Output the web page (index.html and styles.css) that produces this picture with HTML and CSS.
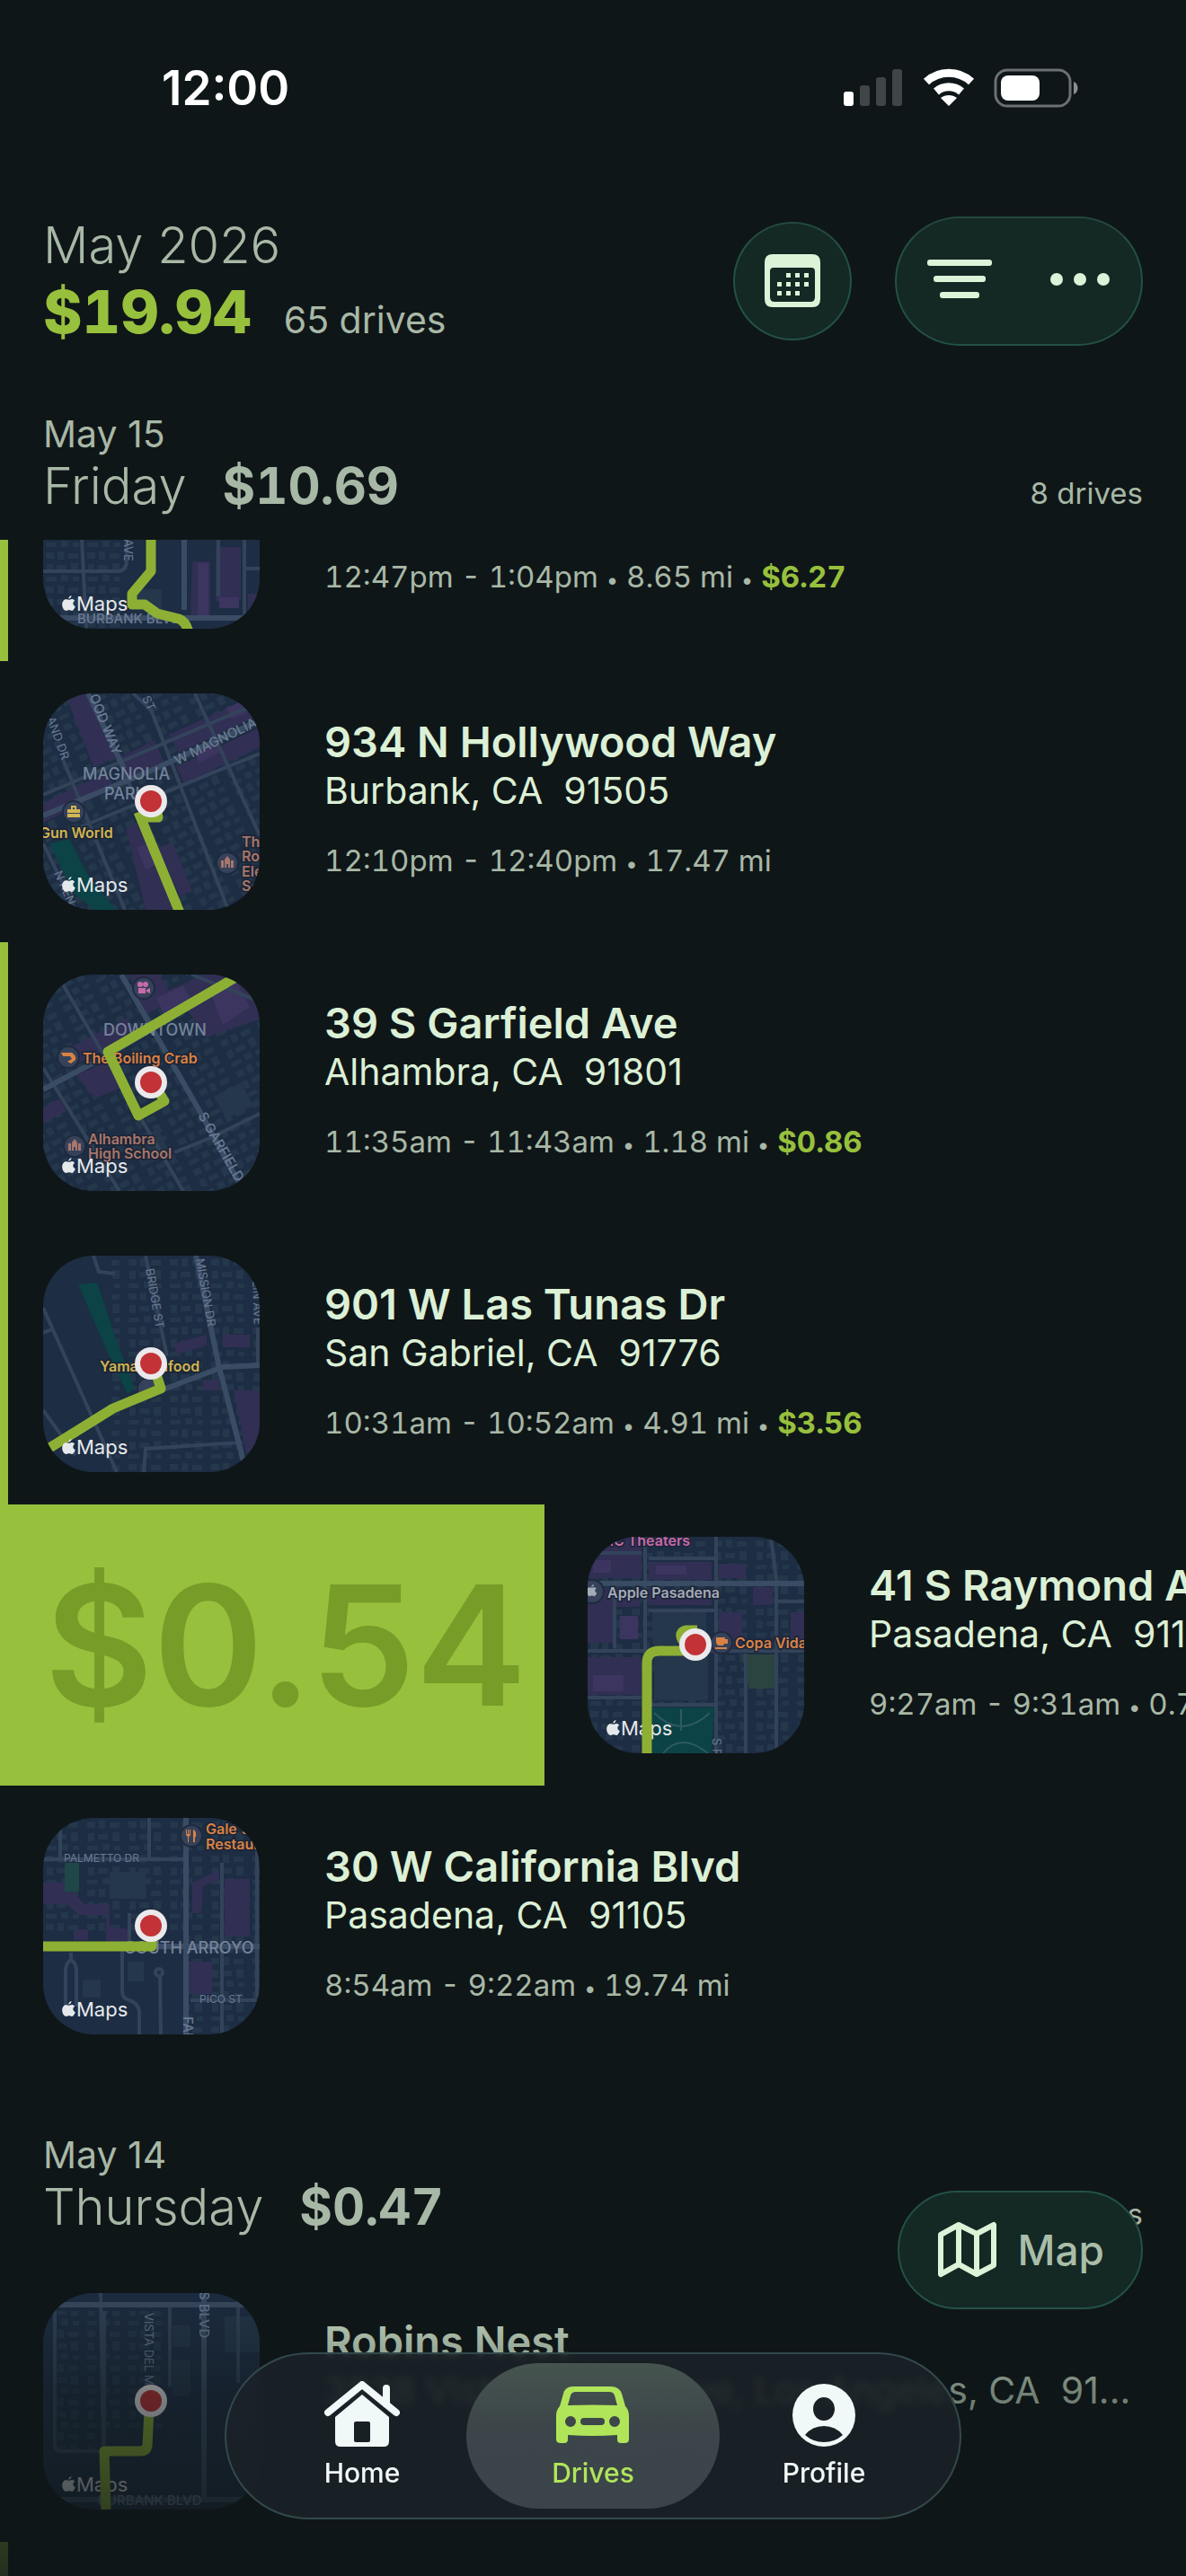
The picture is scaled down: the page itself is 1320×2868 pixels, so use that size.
FILE: index.html
```
<!DOCTYPE html>
<html lang="en">

<head>
    <meta charset="UTF-8">
    <meta name="viewport" content="width=device-width, initial-scale=1.0">
    <title>Drives</title>
    <link rel="stylesheet" href="styles.css">
</head>

<body>
    <!-- shared icons and map textures -->
    <svg class="defs" width="0" height="0" aria-hidden="true">
        <defs>
            <pattern id="blocks" width="46" height="38" patternUnits="userSpaceOnUse">
                <path class="building" d="M3 4h9v7H3zM16 3h7v9h-7zM28 5h11v6H28zM4 17h7v9H4zM15 18h11v6H15zM31 16h8v10h-8zM3 31h12v5H3zM20 29h8v7h-8zM33 31h7v5h-7z" />
            </pattern>
            <pattern id="blocks-tilt" width="46" height="38" patternUnits="userSpaceOnUse" patternTransform="rotate(-27)">
                <path class="building" d="M3 4h9v7H3zM16 3h7v9h-7zM28 5h11v6H28zM4 17h7v9H4zM15 18h11v6H15zM31 16h8v10h-8zM3 31h12v5H3zM20 29h8v7h-8zM33 31h7v5h-7z" />
            </pattern>
            <symbol id="apple" viewBox="0 0 14 17">
                <path d="M9.8 0c.2 1.700-1.300 3.500-3 3.500C6.600 1.800 8.200.2 9.800 0zM7.200 4.600c.7 0 1.700-.8 3.100-.8 1 0 2.300.5 3 1.600-2.600 1.600-2.200 5 .6 6.100-.6 1.800-2 4.500-3.700 4.500-1.100 0-1.500-.7-2.900-.7s-1.800.7-2.900.7C2.300 16-.1 12.600.1 9.200.2 5.900 2.300 4 4.300 4c1.300 0 2.200.6 2.900.6z" />
            </symbol>
            <g id="attribution">
                <use href="#apple" x="21" y="204" width="15" height="18" />
                <text x="37" y="221">Maps</text>
            </g>
            <g id="pin">
                <circle class="pin-ring" cx="120" cy="120" r="18" />
                <circle class="pin-dot" cx="120" cy="120" r="12" />
            </g>
        </defs>
    </svg>

    <div class="status-bar">
        <span class="time">12:00</span>
        <svg class="status-icons" width="264" height="44" viewBox="0 0 264 44" aria-hidden="true">
            <rect x="1" y="26" width="11" height="16" rx="3" fill="#fff" />
            <rect x="19" y="19" width="11" height="23" rx="3" fill="#404547" />
            <rect x="37" y="10" width="11" height="32" rx="3" fill="#404547" />
            <rect x="55" y="1" width="11" height="41" rx="3" fill="#404547" />
            <path d="M118 42l-9-9c5-4 13-4 18 0z" fill="#fff" />
            <path d="M104 26c8-7 20-7 28 0" fill="none" stroke="#fff" stroke-width="9" />
            <path d="M93 15c14-13 36-13 50 0" fill="none" stroke="#fff" stroke-width="9" />
            <rect x="170" y="2" width="83" height="40" rx="13" fill="none" stroke="#6b7072" stroke-width="3" />
            <rect x="176" y="8" width="43" height="28" rx="8" fill="#fff" />
            <path d="M257 15c6 2 6 12 0 14z" fill="#8a8e90" />
        </svg>
    </div>

    <header class="summary">
        <div>
            <div class="month">May 2026</div>
            <div class="month-totals">
                <span class="total">$19.94</span>
                <span class="count">65 drives</span>
            </div>
        </div>
        <div class="actions">
            <button class="glass round" aria-label="Calendar">
                <svg width="64" height="60" viewBox="0 0 64 60">
                    <path fill-rule="evenodd" d="M10 0h44q9 0 9 9v41q0 9-9 9H10q-9 0-9-9V9q0-9 9-9zM11 15q-4 0-4 4v29q0 5 5 5h40q5 0 5-5V19q0-4-4-4z" />
                    <path d="M25 21h5v5h-5zM35 21h5v5h-5zM45 21h5v5h-5zM15 31h5v5h-5zM25 31h5v5h-5zM35 31h5v5h-5zM45 31h5v5h-5zM15 41h5v5h-5zM25 41h5v5h-5zM35 41h5v5h-5z" />
                </svg>
            </button>
            <div class="glass group">
                <button aria-label="Filter">
                    <svg width="72" height="44" viewBox="0 0 72 44">
                        <rect x="0" y="0" width="72" height="7" rx="3" />
                        <rect x="7" y="18" width="58" height="7" rx="3" />
                        <rect x="14" y="36" width="44" height="7" rx="3" />
                    </svg>
                </button>
                <button aria-label="More">
                    <svg width="68" height="16" viewBox="0 0 68 16">
                        <circle cx="8" cy="8" r="7" />
                        <circle cx="34" cy="8" r="7" />
                        <circle cx="60" cy="8" r="7" />
                    </svg>
                </button>
            </div>
        </div>
    </header>

    <main class="days">
        <section>
            <div class="day-header">
                <div class="date">May 15</div>
                <div class="day-line">
                    <h2>Friday</h2>
                    <span class="day-total">$10.69</span>
                    <span class="day-count">8 drives</span>
                </div>
            </div>

            <article class="drive business partial">
                <svg class="map" viewBox="0 0 241 241">
                    <rect class="land" width="241" height="241" />
                    <rect width="92" height="241" fill="url(#blocks)" />
                    <path class="shops" d="M166 166h20v60h-22zM192 150h28v60h-28zM228 202h13v20h-13z" />
                    <path class="shops-dark" d="M172 168h12v58h-12zM196 206h22v12h-22z" />
                    <path class="road" d="M42 120l6 121M0 177h82q11 0 11-12V120M195 120v85M224 120v109M224 174h17" />
                    <path class="road wide" d="M157 120v100M0 229h241" />
                    <path class="building" d="M104 197h28v22h-28z" />
                    <text class="street" transform="translate(90 141) rotate(90)">AVE</text>
                    <text class="street big" x="38" y="235">BURBANK BLVD</text>
                    <path class="route" d="M120 120v57l-21 25v12h14l14 10 24 6q8 3 11 15" />
                    <use class="attribution" href="#attribution" />
                </svg>
                <div class="info">
                    <p class="meta">12:47pm - 1:04pm <i>•</i> 8.65 mi <i>•</i> <b>$6.27</b></p>
                </div>
            </article>

            <article class="drive">
                <svg class="map" viewBox="0 0 241 241">
                    <rect class="land" width="241" height="241" />
                    <rect width="241" height="241" fill="url(#blocks-tilt)" />
                    <path class="shops" d="M26 4l24-6 34 72-28 12zM84 72l40-20 12 28-40 20zM140 46l101-46v24l-90 42zM148 82l93-44v22l-84 40zM0 122l70-34 8 18-78 38zM92 150l16-8 44 99h-38zM128 172l16-6 22 54-14 6z" />
                    <path class="shops-dark" d="M166 62l26-12 8 14-26 13zM204 16l24-10 6 12-24 11zM104 172l18-8 10 24-18 8z" />
                    <path class="park" d="M7 167l22-5 22 42 30 37H57L34 222z" />
                    <path class="road" d="M21 71l70 170M0 167l36 74M100 0l20 18 86 223M169 0l72 158M0 113L241 10M36 151L241 67M82 67l72 174" />
                    <path class="road wide" d="M50 0l40 84M0 136l120-50L241 30" />
                    <text class="street" transform="translate(4 28) rotate(70)">AND DR</text>
                    <text class="street big" transform="translate(51 3) rotate(68)">OOD WAY</text>
                    <text class="street" transform="translate(110 5) rotate(66)">ST</text>
                    <text class="street big" transform="translate(149 80) rotate(-26)">W MAGNOLIA</text>
                    <text class="street" transform="translate(12 200) rotate(66)">N KEN</text>
                    <text class="area" x="44" y="96">MAGNOLIA</text>
                    <text class="area" x="68" y="118">PARK</text>
                    <circle class="poi-ring" cx="34" cy="132" r="12" />
                    <path fill="#d0b552" d="M27 129h14v4H27zM27 134h14v4H27zM31 125h6v4h-2v-2h-2v2h-2z" />
                    <text class="poi yellow" x="-4" y="161">Gun World</text>
                    <circle class="poi-ring" cx="205" cy="189" r="12" />
                    <path fill="#a8766a" d="M198 186h3v8h-3zM202 185l3-4 3 4v9h-2v-4h-2v4h-2zM209 186h3v8h-3z" />
                    <text class="poi brown"><tspan x="221" y="171">The</tspan><tspan x="221" y="187">Rob</tspan><tspan x="221" y="204">Ele</tspan><tspan x="221" y="220">Sch</tspan></text>
                    <path class="route" d="M106 132l46 112M108 138h20l-2-10" />
                    <use href="#pin" />
                    <use class="attribution" href="#attribution" />
                </svg>
                <div class="info">
                    <h3>934 N Hollywood Way</h3>
                    <p class="city">Burbank, CA&nbsp; 91505</p>
                    <p class="meta">12:10pm - 12:40pm <i>•</i> 17.47 mi</p>
                </div>
            </article>

            <article class="drive business">
                <svg class="map" viewBox="0 0 241 241">
                    <rect class="land" width="241" height="241" />
                    <rect width="241" height="241" fill="url(#blocks-tilt)" />
                    <path class="shops" d="M96 0h34l16 28-34 18zM130 22l50-22h40l21 30v20l-60 20-20-30-20 10zM24 84l70-36 10 18-72 36zM36 112l34-14 16 28-28 12zM0 148l18-10 8 14-26 14z" />
                    <path class="shops-dark" d="M186 20l28-14 16 30-30 20zM126 26l30-14 8 16-30 16z" />
                    <path class="building" d="M190 136l30-16 14 26-30 14zM96 186l32-14 14 28-32 14z" />
                    <path class="road" d="M0 104l85 137M19 6l137 235M146 198l40-16 55-27M165 0l76 30" />
                    <path class="road wide" d="M87 0l86 150 50 91M0 128l72-38L190 20" />
                    <circle class="poi-ring" cx="112" cy="15" r="12" />
                    <path fill="#c76aa8" d="M106 15h8v6h-8zM115 17l4-2v6l-4-2zM108 11m-3 0a3 3 0 1 0 6 0a3 3 0 1 0-6 0M114 11m-3 0a3 3 0 1 0 6 0a3 3 0 1 0-6 0" />
                    <text class="area" x="67" y="68">DOWNTOWN</text>
                    <circle class="poi-ring" cx="28" cy="92" r="12" />
                    <path fill="#d98244" d="M20 87h12q5 3 4 8l-5 4-4-2 5-3-2-3h-8z" />
                    <text class="poi orange" x="44" y="99">The Boiling Crab</text>
                    <circle class="poi-ring" cx="35" cy="191" r="12" />
                    <path fill="#a8766a" d="M28 188h3v8h-3zM32 187l3-4 3 4v9h-2v-4h-2v4h-2zM39 188h3v8h-3z" />
                    <text class="poi brown"><tspan x="50" y="189">Alhambra</tspan><tspan x="50" y="205">High School</tspan></text>
                    <text class="street big" transform="translate(172 157) rotate(60)">S GARFIELD</text>
                    <path class="route" d="M218 1L72 86l34 71 29-16-6-10" />
                    <use href="#pin" />
                    <use class="attribution" href="#attribution" />
                </svg>
                <div class="info">
                    <h3>39 S Garfield Ave</h3>
                    <p class="city">Alhambra, CA&nbsp; 91801</p>
                    <p class="meta">11:35am - 11:43am <i>•</i> 1.18 mi <i>•</i> <b>$0.86</b></p>
                </div>
            </article>

            <article class="drive business">
                <svg class="map" viewBox="0 0 241 241">
                    <rect class="land" width="241" height="241" />
                    <rect x="76" width="165" height="241" fill="url(#blocks)" />
                    <path class="shops" d="M146 98l36-10v12l-34 10zM200 88h30v14h-30zM178 138h18v12h-18zM212 150h29v70h-15z" />
                    <path class="park" d="M39 32l21-2 20 60 22 58-8 6-16-32z" />
                    <path class="road" d="M114 0l24 112M0 58l82 183M56 0l6 18 18 2M0 86l10-4M112 241l2-26 107-7M239 80v42M0 172l36 50" />
                    <path class="road wide" d="M170 0l26 125 8 30 22 86M131 150l69-26 41-2" />
                    <text class="street" transform="translate(114 15) rotate(80)">BRIDGE ST</text>
                    <text class="street" transform="translate(170 4) rotate(80)">MISSION DR</text>
                    <text class="street" transform="translate(233 28) rotate(88)">LIN AVE</text>
                    <circle class="poi-ring" cx="117" cy="148" r="12" />
                    <text class="poi yellow" x="63" y="129">Yama Seafood</text>
                    <path class="route" d="M4 216l74-46 53-22-5-16" />
                    <use href="#pin" />
                    <use class="attribution" href="#attribution" />
                </svg>
                <div class="info">
                    <h3>901 W Las Tunas Dr</h3>
                    <p class="city">San Gabriel, CA&nbsp; 91776</p>
                    <p class="meta">10:31am - 10:52am <i>•</i> 4.91 mi <i>•</i> <b>$3.56</b></p>
                </div>
            </article>

            <div class="swipe">
                <div class="swipe-value">$0.54</div>
                <article class="drive">
                    <svg class="map" viewBox="0 0 241 241">
                        <rect class="land" width="241" height="241" />
                        <rect width="241" height="241" fill="url(#blocks)" />
                        <path class="shops" d="M0 0h60v46H0zM68 28h70v20H68zM146 30h30v16h-30zM0 58h28v60H0zM32 58h26v20H32zM68 58h70v18H68zM146 84h26v40h-26zM184 56h22v20h-22zM0 134h60v42H0zM226 84h15v34h-15z" />
                        <path class="shops-dark" d="M6 26h20v14H6zM76 32h34v10H76zM36 88h20v26H36zM6 154h34v18H6z" />
                        <path class="building" d="M74 132h60v50H74zM72 84h60v36H72z" />
                        <path fill="#2b443f" d="M171 131h37v38h-28z" />
                        <path class="park" d="M72 190h69l-3 51H72z" />
                        <path class="road" d="M64 0v241M143 0v241M204 0l6 48v193M176 130v111M0 127h241M68 24h75M0 18h60M68 82h75M210 72h31M0 179h60M66 187h75M30 58v66" />
                        <path class="road wide" d="M0 52h241" />
                        <path class="trail" d="M74 196q30 30 62 0M84 241q20-24 50 0M104 192v24" />
                        <text class="poi pink" x="10" y="10">iPIC Theaters</text>
                        <circle class="poi-ring" cx="5" cy="61" r="13" />
                        <use href="#apple" x="-2" y="53" width="13" height="14" fill="#a3aab8" />
                        <text class="poi gray" x="22" y="68">Apple Pasadena</text>
                        <circle class="poi-ring" cx="149" cy="118" r="12" />
                        <path fill="#d98244" d="M143 112h10v2h3v5h-4l-1 2h-6l-2-3zM142 123h13v2h-13z" />
                        <text class="poi orange" x="164" y="124">Copa Vida</text>
                        <text class="street" transform="translate(139 224) rotate(90)">S R</text>
                        <use class="attribution" href="#attribution" />
                        <path class="route" d="M66 241V141q0-14 14-14h40M106 116q-6-10 4-12h12" />
                        <use href="#pin" />
                    </svg>
                    <div class="info">
                        <h3>41 S Raymond Ave</h3>
                        <p class="city">Pasadena, CA&nbsp; 91105</p>
                        <p class="meta">9:27am - 9:31am <i>•</i> 0.75 mi</p>
                    </div>
                </article>
            </div>

            <article class="drive">
                <svg class="map" viewBox="0 0 241 241">
                    <rect class="land" width="241" height="241" />
                    <rect width="241" height="130" fill="url(#blocks)" />
                    <rect x="160" y="130" width="81" height="111" fill="url(#blocks)" />
                    <path class="shops" d="M0 72h24l22 24h28v24l20 4v18H70v-34H40L26 96H0zM166 72l30-14v10l-18 8-2 30h-10zM202 68h28v64h-28zM162 160h26v36h-26zM34 124h16v12H34z" />
                    <path fill="#1f4747" d="M24 50h16v32H24z" />
                    <path class="building" d="M94 160h18v22H94zM44 180h20v20H44zM74 60h40v30H74z" />
                    <path class="road" d="M118 0v48M0 46h156M19 0v46M199 50v191M238 0v200M164 203h74M88 143v50q0 8 8 10 11 4 11 14v24M130 174l1 67M31 150v8q-6 4-6 12v44M31 158q6 4 6 12v40M96 106v34" />
                    <path class="road wide" d="M159 0v241M0 143h241" />
                    <circle class="road" cx="129" cy="172" r="4" />
                    <text class="street small" x="23" y="49">PALMETTO DR</text>
                    <text class="street small" x="174" y="206">PICO ST</text>
                    <text class="street big" transform="translate(156 221) rotate(90)">FAI</text>
                    <text class="area" x="91" y="151">SOUTH ARROYO</text>
                    <circle class="poi-ring" cx="165" cy="20" r="12" />
                    <path fill="#d98244" d="M159 13h1v5h1v-5h1v5h1v-5h1v6l-2 2v6h-1v-6l-2-2zM167 13q4 1 3 8h-1v6h-2z" />
                    <text class="poi orange"><tspan x="181" y="18">Gale's</tspan><tspan x="181" y="35">Restaurant</tspan></text>
                    <path class="route" d="M0 143h121v-12" />
                    <use href="#pin" />
                    <use class="attribution" href="#attribution" />
                </svg>
                <div class="info">
                    <h3>30 W California Blvd</h3>
                    <p class="city">Pasadena, CA&nbsp; 91105</p>
                    <p class="meta">8:54am - 9:22am <i>•</i> 19.74 mi</p>
                </div>
            </article>
        </section>

        <section>
            <div class="day-header">
                <div class="date">May 14</div>
                <div class="day-line">
                    <h2>Thursday</h2>
                    <span class="day-total">$0.47</span>
                    <span class="day-count">4 drives</span>
                </div>
            </div>

            <article class="drive">
                <svg class="map" viewBox="0 0 241 241">
                    <rect class="land" width="241" height="241" />
                    <rect x="16" y="20" width="44" height="156" fill="url(#blocks)" />
                    <rect x="68" y="20" width="70" height="130" fill="url(#blocks)" />
                    <path class="building" d="M202 26h39v40h-39zM144 36h20v24h-20zM144 74h20v40h-20z" />
                    <path class="road" d="M13 10v160q0 6 6 6h44M64 0l3 176M141 14v90M217 0v100M68 170V20" />
                    <path class="road wide" d="M0 13h241M179 0v230M0 230h241" />
                    <text class="street" transform="translate(113 22) rotate(90)">VISTA DEL MAR</text>
                    <text class="street big" transform="translate(174 -2) rotate(90)">S BLVD</text>
                    <text class="street big" x="61" y="236">BURBANK BLVD</text>
                    <use class="attribution" href="#attribution" />
                    <path class="route" d="M118 130l-2 40q-1 6-8 6H68l2 65" />
                    <use href="#pin" />
                </svg>
                <div class="info">
                    <h3>Robins Nest</h3>
                    <p class="city">3838 Vista Del Mar Ave, Los Angeles, CA&nbsp; 91...</p>
                </div>
            </article>

            <article class="drive business"></article>
        </section>
    </main>

    <div class="fade"></div>

    <button class="glass map-button">
        <svg width="66" height="64" viewBox="0 0 66 64" aria-hidden="true">
            <path d="M3 15L23 4l20 10L62 4v45L43 59 23 48 3 59zM23 4v44M43 14v45" />
        </svg>
        Map
    </button>

    <nav class="tab-bar">
        <a href="#home">
            <svg width="84" height="74" viewBox="0 0 84 74" aria-hidden="true">
                <path d="M4 35L42 4l38 31M69 8v18" fill="none" stroke="currentColor" stroke-width="8" stroke-linecap="round" stroke-linejoin="round" />
                <path fill-rule="evenodd" d="M42 15l30 25v27q0 6-6 6H18q-6 0-6-6V40zM35 45q-2 0-2 2v19q0 2 2 2h14q2 0 2-2V47q0-2-2-2z" />
            </svg>
            Home
        </a>
        <a href="#drives" class="active">
            <svg width="84" height="74" viewBox="0 0 84 74" aria-hidden="true">
                <path fill-rule="evenodd" d="M20 6h42q9 0 12 8l4 14q4 4 4 11v26q0 4-5 4h-4q-4 0-4-4v-5q-27 2-55 0v5q0 4-4 4H6q-5 0-5-4V39q0-7 4-11l4-14q2-8 11-8zM23 12q-5 0-6 4l-3 11q28-1 55 0l-3-11q-1-4-6-4zM17 39a6 6 0 1 0 0 12 6 6 0 1 0 0-12zM66 39a6 6 0 1 0 0 12 6 6 0 1 0 0-12zM32 41q-4 0-4 4t4 4h19q4 0 4-4t-4-4z" />
            </svg>
            Drives
        </a>
        <a href="#profile">
            <svg width="84" height="74" viewBox="0 0 84 74" aria-hidden="true">
                <path fill-rule="evenodd" d="M42 3a35 35 0 1 0 0 70 35 35 0 1 0 0-70zM42 18c7 0 12 6 12 13s-5 13-12 13-12-6-12-13 5-13 12-13zM21 60q8-10 21-10t21 10q-9 8-21 8t-21-8z" />
            </svg>
            Profile
        </a>
    </nav>
</body>

</html>
```

FILE: styles.css
```
* {
    box-sizing: border-box;
}

body {
    font-family: Inter, "Liberation Sans", sans-serif;
    background-color: #0f1618;
    color: #dcf0d6;
    margin: 0;
    height: 100vh;
    display: flex;
    flex-direction: column;
    overflow: hidden;
    position: relative;
}

h2, h3, p {
    margin: 0;
    font-weight: 400;
}

button {
    font: inherit;
    color: inherit;
    background: none;
    border: none;
    padding: 0;
    cursor: pointer;
}

.defs {
    position: absolute;
}

/* status bar */
.status-bar {
    height: 196px;
    flex: none;
    padding: 0 118px 0 180px;
    display: flex;
    justify-content: space-between;
    align-items: center;
}

.time {
    font-size: 53px;
    font-weight: 600;
    color: #fff;
}

/* month summary */
.summary {
    flex: none;
    padding: 41px 48px 0;
    display: flex;
    justify-content: space-between;
    align-items: flex-end;
    color: #a8b8a6;
}

.month {
    font-size: 56px;
    font-weight: 300;
    line-height: 72px;
}

.month-totals {
    display: flex;
    align-items: baseline;
    gap: 36px;
    height: 76px;
    line-height: 76px;
}

.total {
    font-size: 66px;
    font-weight: 800;
    color: #97c03d;
    font-variant-numeric: tabular-nums;
}

.count {
    font-size: 41px;
}

.actions {
    display: flex;
    align-items: center;
    gap: 48px;
}

.glass {
    background-color: #142824;
    border: 2px solid #235147;
    border-top-color: #24483f;
    fill: #dcf3d8;
}

.glass button {
    fill: inherit;
}

.round {
    width: 132px;
    height: 132px;
    border-radius: 50%;
    display: flex;
    justify-content: center;
    align-items: center;
}

.group {
    width: 276px;
    height: 144px;
    border-radius: 72px;
    display: flex;
    justify-content: space-between;
    align-items: center;
    padding: 0 34px;
}

/* day sections */
.days {
    flex: 1;
    min-height: 0;
    overflow: hidden;
}

.day-header {
    padding: 74px 48px 26px;
    color: #a8b8a6;
}

.date {
    font-size: 41px;
    line-height: 48px;
}

.day-line {
    display: flex;
    align-items: baseline;
    height: 68px;
    line-height: 68px;
}

h2 {
    font-size: 56px;
    font-weight: 300;
    margin-right: 40px;
}

.day-total {
    font-size: 56px;
    font-weight: 700;
    font-variant-numeric: tabular-nums;
}

.day-count {
    font-size: 33px;
    margin-left: auto;
}

/* drive rows */
.drive {
    height: 313px;
    padding: 36px 48px;
    display: flex;
    gap: 72px;
}

.business {
    border-left: 9px solid #97c03d;
    padding-left: 39px;
}

.partial {
    height: 135px;
    align-items: flex-end;
    overflow: hidden;
}

.info {
    flex: 1;
    min-width: 0;
    padding-top: 26px;
    white-space: nowrap;
}

.partial .info {
    padding-bottom: 34px;
}

h3 {
    font-size: 47px;
    font-weight: 600;
    line-height: 56px;
}

.city {
    font-size: 41px;
    line-height: 52px;
}

.meta {
    margin-top: 32px;
    font-size: 33px;
    line-height: 40px;
    color: #a8b8a6;
    font-variant-numeric: tabular-nums;
}

.meta i {
    font-size: 24px;
    font-style: normal;
}

.meta b {
    font-weight: 700;
    color: #97c03d;
}

/* row that is being swiped to the right */
.swipe {
    display: flex;
    overflow: hidden;
}

.swipe-value {
    flex: none;
    width: 606px;
    padding-left: 30px;
    background-color: #97c03d;
    color: #789c28;
    font-size: 186px;
    font-weight: 600;
    line-height: 313px;
    text-align: center;
}

.swipe .drive {
    flex: none;
    width: 100%;
}

/* map thumbnails */
.map {
    flex: none;
    width: 241px;
    height: 241px;
    border-radius: 56px;
}

.land {
    fill: #1d2d43;
}

.building {
    fill: #24374b;
}

.shops {
    fill: #312f54;
}

.shops-dark {
    fill: #3b3560;
}

.park {
    fill: #0b4346;
}

.road {
    fill: none;
    stroke: #32435a;
    stroke-width: 4;
}

.road.wide {
    stroke: #3a4c64;
    stroke-width: 6;
}

.trail {
    fill: none;
    stroke: #2f5a60;
    stroke-width: 2;
}

.route {
    fill: none;
    stroke: #8db034;
    stroke-width: 11;
    stroke-linejoin: round;
}

.pin-ring {
    fill: #ebe9ec;
}

.pin-dot {
    fill: #c23236;
}

.street {
    font-size: 13px;
    fill: #697a92;
}

.street.small {
    font-size: 12px;
}

.street.big {
    font-size: 15px;
    font-weight: 500;
}

.area {
    font-size: 18px;
    font-weight: 500;
    fill: #74839a;
}

.poi {
    font-size: 16px;
    font-weight: 600;
    stroke: #1b2436;
    stroke-width: 3px;
    paint-order: stroke;
}

.poi-ring {
    fill: #36425a;
    stroke: #1f2a3e;
    stroke-width: 2;
}

.yellow { fill: #d0b552; }
.orange { fill: #d98244; }
.brown { fill: #a8766a; }
.pink { fill: #c76aa8; }
.gray { fill: #a3aab8; }

.attribution {
    fill: #e6e9ec;
    font-size: 22px;
}

/* floating controls */
.fade {
    position: absolute;
    left: 0;
    right: 0;
    bottom: 0;
    height: 340px;
    background: linear-gradient(rgba(15, 22, 24, 0), rgba(15, 22, 24, 0.5) 40%, rgba(15, 22, 24, 0.85));
}

.map-button {
    position: absolute;
    right: 48px;
    bottom: 297px;
    height: 132px;
    padding: 0 41px 0 43px;
    border: 2px solid #235147;
    border-radius: 66px;
    display: flex;
    align-items: center;
    gap: 22px;
    font-size: 46px;
    font-weight: 500;
    color: #a9bda8;
}

.map-button svg {
    fill: none;
    stroke: #dcf3d8;
    stroke-width: 6;
    stroke-linejoin: round;
}

.tab-bar {
    position: absolute;
    left: 50%;
    bottom: 63px;
    transform: translateX(-50%);
    display: flex;
    padding: 10px;
    border: 2px solid #33494c;
    border-radius: 93px;
    background-color: rgba(27, 34, 40, 0.86);
    backdrop-filter: blur(4px);
}

.tab-bar a {
    width: 282px;
    height: 162px;
    border-radius: 81px;
    display: flex;
    flex-direction: column;
    justify-content: center;
    align-items: center;
    gap: 8px;
    font-size: 30px;
    font-weight: 500;
    line-height: 40px;
    text-decoration: none;
    color: #f0f8f8;
    fill: currentColor;
}

.tab-bar .active {
    margin: 0 -25px;
    color: #b0e55a;
    background: linear-gradient(#46544f, #3c4549 45%, #3b4448);
}
```
